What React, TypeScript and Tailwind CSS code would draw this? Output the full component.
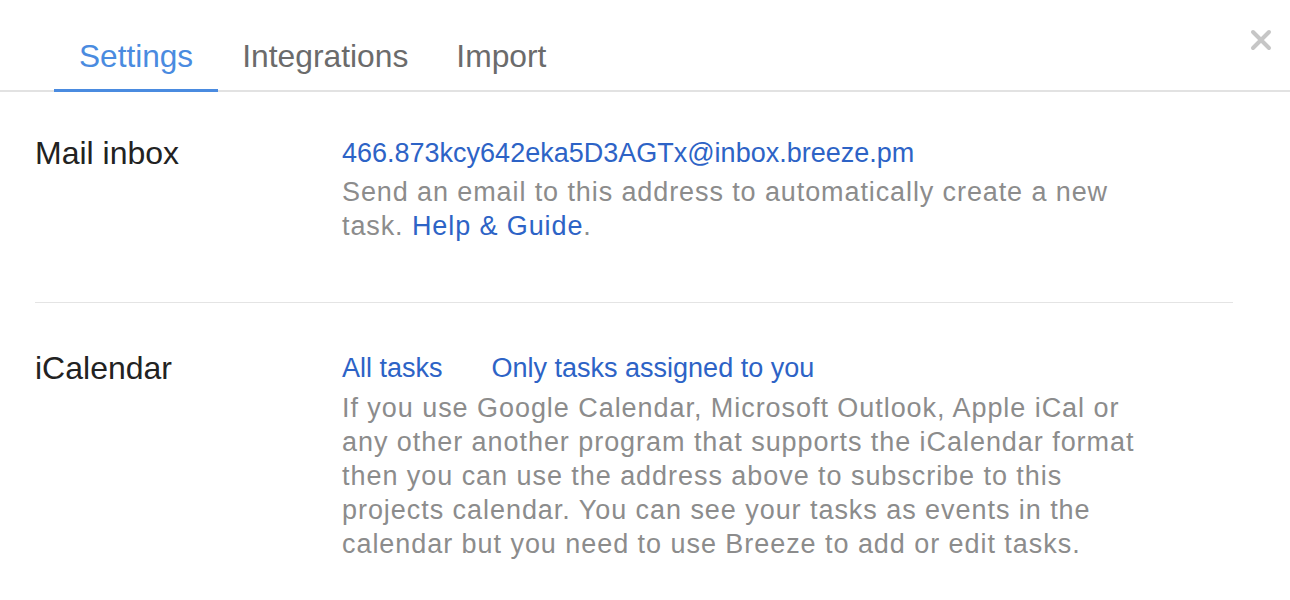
import { useState } from 'react';

const tabs = ['Settings', 'Integrations', 'Import'];

function CloseIcon() {
  return (
    <svg width="22" height="22" viewBox="0 0 22 22" className="text-[#c6c6c6]">
      <path d="M3 3 L19 19 M19 3 L3 19" stroke="currentColor" strokeWidth="4" strokeLinecap="round" />
    </svg>
  );
}

export default function App() {
  const [active, setActive] = useState('Settings');

  return (
    <div className="relative w-[1290px] h-[600px] bg-white font-['Liberation_Sans',Arial,sans-serif]">
      <button className="absolute right-[18px] top-[29px]">
        <CloseIcon />
      </button>

      {/* tab bar */}
      <div className="flex pl-[54px] border-b-2 border-[#e2e2e2] h-[92px] items-end">
        {tabs.map((t) => (
          <button
            key={t}
            onClick={() => setActive(t)}
            className={
              active === t
                ? 'px-[25px] pb-[13px] text-[31.6px] leading-[40px] text-[#4a8be0] border-b-[3px] border-[#4a8be0] -mb-[2px]'
                : 'px-[24px] pb-[13px] text-[31.8px] leading-[40px] text-[#6b6b6b] border-b-[3px] border-transparent -mb-[2px]'
            }
          >
            {t}
          </button>
        ))}
      </div>

      <div className="px-[35px] pr-[57px]">
        {/* mail inbox */}
        <div className="flex pt-[44px] pb-[59px] border-b border-[#e4e4e4]">
          <div className="w-[307px] text-[32px] leading-[34px] text-[#222]">Mail inbox</div>
          <div className="w-[805px] text-[27px] leading-[34px]">
            <a className="text-[#2d63c6]">466.873kcy642eka5D3AGTx@inbox.breeze.pm</a>
            <p className="mt-[5px] text-[#8c8c8c] tracking-[0.9px]">
              <span>Send an email to this address to automatically create a new</span>{' '}
              <span>task.</span> <a className="text-[#2d63c6]">Help &amp; Guide</a>.
            </p>
          </div>
        </div>

        {/* iCalendar */}
        <div className="flex pt-[48px]">
          <div className="w-[307px] text-[32px] leading-[34px] text-[#222]">iCalendar</div>
          <div className="w-[805px] text-[27px] leading-[34px]">
            <div className="flex gap-[49px] text-[#2d63c6]">
              <a>All tasks</a>
              <a>Only tasks assigned to you</a>
            </div>
            <p className="mt-[6px] text-[#8c8c8c] tracking-[0.95px]">
              If you use Google Calendar, Microsoft Outlook, Apple iCal or any other another program that
              supports the iCalendar format then you can use the address above to subscribe to this projects
              calendar. You can see your tasks as events in the calendar but you need to use Breeze to add or
              edit tasks.
            </p>
          </div>
        </div>
      </div>
    </div>
  );
}
